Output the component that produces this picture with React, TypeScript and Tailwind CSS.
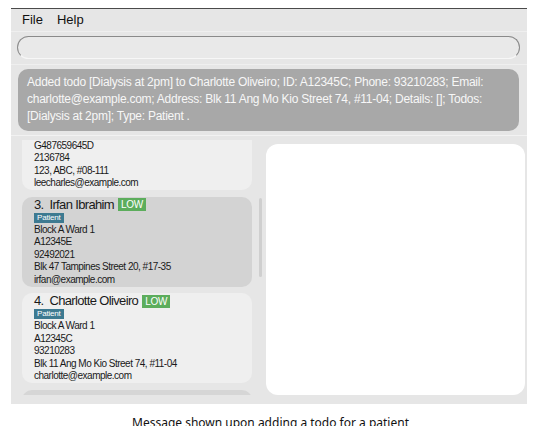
import React from "react";

interface Patient {
  index: number;
  name: string;
  ward: string;
  id: string;
  phone: string;
  address: string;
  email: string;
  selected?: boolean;
}

const patients: Patient[] = [
  {
    index: 2,
    name: "Charles Lee",
    ward: "Block B Ward 2",
    id: "G487659645D",
    phone: "2136784",
    address: "123, ABC, #08-111",
    email: "leecharles@example.com",
  },
  {
    index: 3,
    name: "Irfan Ibrahim",
    ward: "Block A Ward 1",
    id: "A12345E",
    phone: "92492021",
    address: "Blk 47 Tampines Street 20, #17-35",
    email: "irfan@example.com",
    selected: true,
  },
  {
    index: 4,
    name: "Charlotte Oliveiro",
    ward: "Block A Ward 1",
    id: "A12345C",
    phone: "93210283",
    address: "Blk 11 Ang Mo Kio Street 74, #11-04",
    email: "charlotte@example.com",
  },
];

const resultLines = [
  "Added todo [Dialysis at 2pm] to Charlotte Oliveiro; ID: A12345C; Phone: 93210283; Email:",
  "charlotte@example.com; Address: Blk 11 Ang Mo Kio Street 74, #11-04; Details: []; Todos:",
  "[Dialysis at 2pm]; Type: Patient .",
];

function PatientCard({ p }: { p: Patient }) {
  return (
    <div
      className={`h-[90px] w-[230px] shrink-0 rounded-[10px] pl-[12px] pt-[1px] ${
        p.selected ? "bg-[#d3d3d3]" : "bg-[#efefef]"
      }`}
    >
      {/* Name row */}
      <div className="flex h-[14px] items-center gap-[4px]">
        <span className="whitespace-pre text-[13px] leading-[14px] tracking-[-0.65px] text-[#1a1a1a]">
          {`${p.index}.  ${p.name}`}
        </span>
        <span className="flex h-[13px] items-center bg-[#5cad5c] px-[3px] text-[10px] leading-[13px] tracking-[-0.3px] text-white">
          LOW
        </span>
      </div>
      <div className="mt-[1px] flex">
        <span className="flex h-[10px] items-center bg-[#3d7a91] px-[3px] text-[8px] leading-[10px] tracking-[-0.2px] text-white">
          Patient
        </span>
      </div>
      <div className="mt-[1px] text-[10px] leading-[12.5px] tracking-[-0.5px] text-[#1a1a1a]">
        <div>{p.ward}</div>
        <div>{p.id}</div>
        <div>{p.phone}</div>
        <div>{p.address}</div>
        <div>{p.email}</div>
      </div>
    </div>
  );
}

export default function App() {
  return (
    <div
      className="relative h-[426px] w-[541px] overflow-hidden bg-white"
      style={{ fontFamily: '"Liberation Sans", Arial, sans-serif' }}
    >
      <div className="ml-[11px] mt-[8px] flex h-[396px] w-[516px] flex-col border-t border-[#4a4a4a] bg-[#e6e6e6]">
        {/* Menu bar */}
        <div className="flex h-[22px] items-center gap-[14px] px-[11px] text-[13px] text-[#111]">
          <span>File</span>
          <span>Help</span>
        </div>
        <div className="border-t border-[#efefef]" />

        {/* Command box */}
        <div className="px-[6px] pt-[4px]">
          <div className="h-[23px] w-[503px] rounded-full border border-[#8a8a8a] border-b-[#f7f7f7] bg-[#e9e9e9]" />
        </div>
        <div className="mt-[5px] border-t border-[#efefef]" />

        {/* Result display */}
        <div className="px-[7px] pt-[4px]">
          <div className="flex h-[62px] w-[501px] flex-col rounded-[10px] bg-[#a8a8a8] pl-[9px] pr-[4px] pt-[5px] text-[12px] leading-[17px] tracking-[-0.25px] text-[#f7f7f7]">
            {resultLines.map((line) => (
              <span key={line} className="block h-[17px]">
                {line}
              </span>
            ))}
          </div>
        </div>
        <div className="mt-[4px] border-t border-[#f2f2f2]" />

        {/* Main area */}
        <div className="flex flex-1">
          {/* Patient list */}
          <div className="relative mt-[4px] h-[255px] w-[255px] overflow-hidden">
            <div className="-mt-[40px] flex flex-col gap-[6.5px] pl-[11px]">
              {patients.map((p) => (
                <PatientCard key={p.index} p={p} />
              ))}
              <div className="h-[90px] w-[230px] shrink-0 rounded-[10px] bg-[#d6d6d6]" />
            </div>
            {/* Scrollbar */}
            <div className="absolute left-[248px] top-[58px] h-[79px] w-[3px] rounded-full bg-[#cfcfcf]" />
          </div>

          {/* Detail panel */}
          <div className="mt-[8px] h-[251px] w-[259px] rounded-[12px] bg-white" />
        </div>
      </div>

      {/* Caption */}
      <div
        className="mt-[11px] text-center text-[12px] leading-[16px] text-[#111]"
        style={{ fontFamily: '"Noto Sans", sans-serif' }}
      >
        Message shown upon adding a todo for a patient
      </div>
    </div>
  );
}
